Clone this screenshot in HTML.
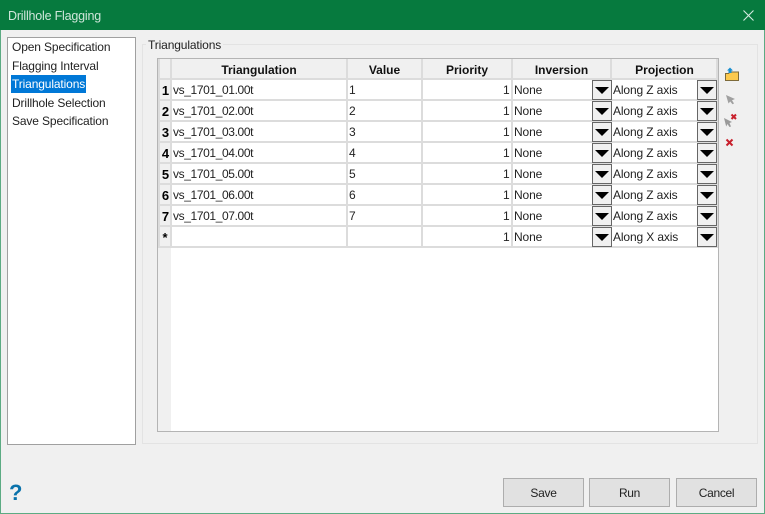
<!DOCTYPE html>
<html><head><meta charset="utf-8"><style>
html,body{margin:0;padding:0}
#w{position:relative;width:765px;height:514px;overflow:hidden;background:#f0f0f0;font-family:"Liberation Sans",sans-serif;font-size:12px;letter-spacing:-.13px;color:#222}
#w div{position:absolute;box-sizing:border-box;white-space:nowrap}
.h{font-weight:bold;text-align:center;top:60px;height:19px;line-height:20px;color:#111;letter-spacing:0}
.c{height:20px;line-height:21px}
.v{letter-spacing:-.38px}
.rh{left:159px;width:12px;height:20px;line-height:21px;font-weight:bold;text-align:right;padding-right:2px;color:#000;font-size:13px}
.l{background:#dcdcdc}
.b{width:20px;height:20px;background:#f0f0f0;border:1px solid #666}
.b:after{content:"";position:absolute;left:2px;top:6px;border-left:7px solid transparent;border-right:7px solid transparent;border-top:7px solid #000}
.btn{top:478px;height:29px;width:81px;background:#e1e1e1;border:1px solid #adadad;text-align:center;line-height:28px;letter-spacing:-.3px}
.li{left:12px;height:18px;line-height:18px}
</style></head><body><div id="w">
<div style="left:0;top:0;width:765px;height:30px;background:#067a3e"></div>
<div style="left:8px;top:7px;color:#cfe6da;font-size:12.5px;letter-spacing:-.2px;line-height:18px">Drillhole Flagging</div>
<svg style="position:absolute;left:742px;top:9px" width="13" height="13"><path d="M1.5 1.5L11.5 11.5M11.5 1.5L1.5 11.5" stroke="#d5ebe0" stroke-width="1.1" fill="none"/></svg>
<div style="left:0;top:30px;width:1px;height:484px;background:#5cab83"></div>
<div style="left:764px;top:30px;width:1px;height:484px;background:#5cab83"></div>
<div style="left:0;top:513px;width:765px;height:1px;background:#5cab83"></div>

<div style="left:7px;top:37px;width:129px;height:408px;background:#fff;border:1px solid #a0a0a0"></div>
<div class="li" style="top:38px">Open Specification</div>
<div class="li" style="top:57px">Flagging Interval</div>
<div style="left:11px;top:75px;width:75px;height:18px;background:#0078d7"></div>
<div class="li" style="top:75px;color:#fff">Triangulations</div>
<div class="li" style="top:94px">Drillhole Selection</div>
<div class="li" style="top:112px">Save Specification</div>

<div style="left:142px;top:44px;width:616px;height:400px;border:1px solid #e3e3e3"></div>
<div style="left:146px;top:37px;padding:0 2px;background:#f0f0f0;line-height:17px">Triangulations</div>

<div style="left:157px;top:58px;width:562px;height:374px;background:#fff;border:1px solid #b4b4b4"></div>
<div style="left:158px;top:59px;width:560px;height:20px;background:#f0f0f0"></div>
<div style="left:158px;top:79px;width:13px;height:352px;background:#f0f0f0"></div>
<div class="h" style="left:171px;width:176px">Triangulation</div>
<div class="h" style="left:347px;width:75px">Value</div>
<div class="h" style="left:422px;width:90px">Priority</div>
<div class="h" style="left:512px;width:99px">Inversion</div>
<div class="h" style="left:611px;width:107px">Projection</div>

<!-- vertical grid -->
<div class="l" style="left:158px;top:59px;width:2px;height:189px"></div>
<div class="l" style="left:170px;top:59px;width:2px;height:189px"></div>
<div class="l" style="left:346px;top:59px;width:2px;height:189px"></div>
<div class="l" style="left:421px;top:59px;width:2px;height:189px"></div>
<div class="l" style="left:511px;top:59px;width:2px;height:189px"></div>
<div class="l" style="left:610px;top:59px;width:2px;height:189px"></div>
<div class="l" style="left:716px;top:59px;width:2px;height:189px"></div>
<!-- horizontal grid -->
<div class="l" style="left:158px;top:78px;width:560px;height:2px"></div>
<div class="l" style="left:158px;top:99px;width:560px;height:2px"></div>
<div class="l" style="left:158px;top:120px;width:560px;height:2px"></div>
<div class="l" style="left:158px;top:141px;width:560px;height:2px"></div>
<div class="l" style="left:158px;top:162px;width:560px;height:2px"></div>
<div class="l" style="left:158px;top:183px;width:560px;height:2px"></div>
<div class="l" style="left:158px;top:204px;width:560px;height:2px"></div>
<div class="l" style="left:158px;top:225px;width:560px;height:2px"></div>
<div class="l" style="left:158px;top:246px;width:560px;height:2px"></div>

<!-- rows -->
<div class="rh" style="top:80px">1</div><div class="c v" style="left:173px;top:80px">vs_1701_01.00t</div><div class="c" style="left:349px;top:80px">1</div><div class="c" style="left:503px;top:80px">1</div><div class="c" style="left:514px;top:80px">None</div><div class="b" style="left:592px;top:80px"></div><div class="c" style="left:613px;top:80px">Along Z axis</div><div class="b" style="left:697px;top:80px"></div>
<div class="rh" style="top:101px">2</div><div class="c v" style="left:173px;top:101px">vs_1701_02.00t</div><div class="c" style="left:349px;top:101px">2</div><div class="c" style="left:503px;top:101px">1</div><div class="c" style="left:514px;top:101px">None</div><div class="b" style="left:592px;top:101px"></div><div class="c" style="left:613px;top:101px">Along Z axis</div><div class="b" style="left:697px;top:101px"></div>
<div class="rh" style="top:122px">3</div><div class="c v" style="left:173px;top:122px">vs_1701_03.00t</div><div class="c" style="left:349px;top:122px">3</div><div class="c" style="left:503px;top:122px">1</div><div class="c" style="left:514px;top:122px">None</div><div class="b" style="left:592px;top:122px"></div><div class="c" style="left:613px;top:122px">Along Z axis</div><div class="b" style="left:697px;top:122px"></div>
<div class="rh" style="top:143px">4</div><div class="c v" style="left:173px;top:143px">vs_1701_04.00t</div><div class="c" style="left:349px;top:143px">4</div><div class="c" style="left:503px;top:143px">1</div><div class="c" style="left:514px;top:143px">None</div><div class="b" style="left:592px;top:143px"></div><div class="c" style="left:613px;top:143px">Along Z axis</div><div class="b" style="left:697px;top:143px"></div>
<div class="rh" style="top:164px">5</div><div class="c v" style="left:173px;top:164px">vs_1701_05.00t</div><div class="c" style="left:349px;top:164px">5</div><div class="c" style="left:503px;top:164px">1</div><div class="c" style="left:514px;top:164px">None</div><div class="b" style="left:592px;top:164px"></div><div class="c" style="left:613px;top:164px">Along Z axis</div><div class="b" style="left:697px;top:164px"></div>
<div class="rh" style="top:185px">6</div><div class="c v" style="left:173px;top:185px">vs_1701_06.00t</div><div class="c" style="left:349px;top:185px">6</div><div class="c" style="left:503px;top:185px">1</div><div class="c" style="left:514px;top:185px">None</div><div class="b" style="left:592px;top:185px"></div><div class="c" style="left:613px;top:185px">Along Z axis</div><div class="b" style="left:697px;top:185px"></div>
<div class="rh" style="top:206px">7</div><div class="c v" style="left:173px;top:206px">vs_1701_07.00t</div><div class="c" style="left:349px;top:206px">7</div><div class="c" style="left:503px;top:206px">1</div><div class="c" style="left:514px;top:206px">None</div><div class="b" style="left:592px;top:206px"></div><div class="c" style="left:613px;top:206px">Along Z axis</div><div class="b" style="left:697px;top:206px"></div>
<div class="rh" style="top:227px;text-align:center;padding:0">*</div><div class="c" style="left:503px;top:227px">1</div><div class="c" style="left:514px;top:227px">None</div><div class="b" style="left:592px;top:227px"></div><div class="c" style="left:613px;top:227px">Along X axis</div><div class="b" style="left:697px;top:227px"></div>

<!-- side icons -->
<svg style="position:absolute;left:724px;top:67px" width="16" height="16"><path d="M1.5 13.500V6.500H4.500L6 5H14.500V13.500Z" fill="#fcc94d" stroke="#7d6a3a"/><path d="M4.500 6V3.500H3L6 .5 9 3.500H7.500V6Z" fill="#1a8fd0"/></svg>
<svg style="position:absolute;left:725px;top:94px" width="11" height="11"><path d="M1 1L10 5 7 6.200 9 9.500 7.500 10.200 5.200 7.500 3.500 9.500Z" fill="#a0a0a0"/></svg>
<svg style="position:absolute;left:723px;top:113px" width="15" height="15"><path d="M1 5L9 9 6.500 10 8 13.500 6.500 14 4.500 11 3.200 13.500Z" fill="#9a9a9a"/><path d="M8.500 1.500L13 6M13 1.500L8.500 6" stroke="#c8202c" stroke-width="2"/></svg>
<svg style="position:absolute;left:725px;top:138px" width="10" height="10"><path d="M1.500 1.500L7.500 7.500M7.500 1.500L1.500 7.500" stroke="#c8202c" stroke-width="2"/></svg>

<div style="left:9px;top:480px;font-weight:bold;font-size:22px;line-height:26px;color:#0a72ab;letter-spacing:0">?</div>
<div class="btn" style="left:503px">Save</div>
<div class="btn" style="left:589px">Run</div>
<div class="btn" style="left:676px">Cancel</div>
</div></body></html>
